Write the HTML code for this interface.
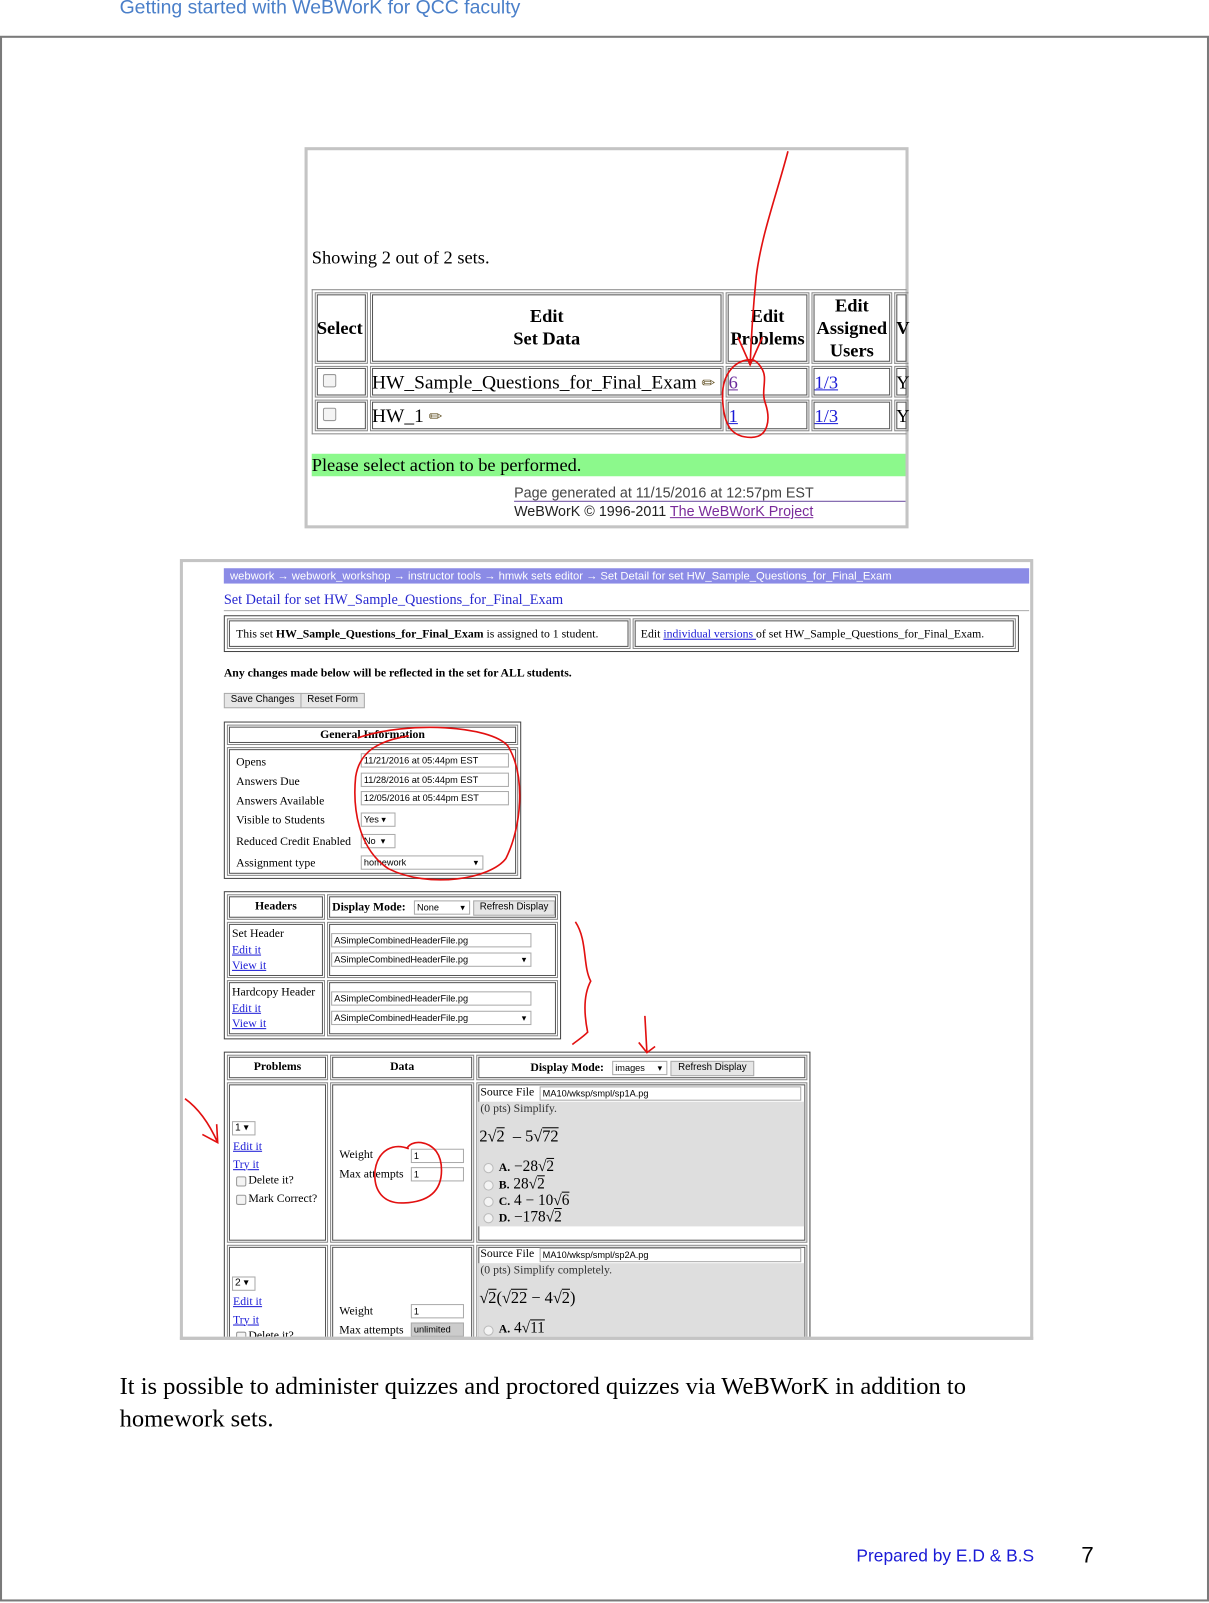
<!DOCTYPE html>
<html><head><meta charset="utf-8"><style>
html,body{margin:0;padding:0;background:#fff;width:1209px;height:1602px;overflow:hidden}
#w{position:absolute;left:0;top:0;width:1183px;height:1568px;transform:scale(1.022);transform-origin:0 0;font-family:"Liberation Serif",serif;color:#000}
.a{position:absolute;white-space:nowrap}
.s{font-family:"Liberation Sans",sans-serif}
.bx{position:absolute;box-sizing:border-box}
.cell{position:absolute;box-sizing:border-box;border:1px solid #888;outline:1px solid #555;outline-offset:-3px}
.in{position:absolute;box-sizing:border-box;border:1px solid #aaa;background:#fff;font-family:"Liberation Sans",sans-serif;font-size:9px;line-height:12px;padding-left:2px;white-space:nowrap;overflow:hidden}
.btn{position:absolute;box-sizing:border-box;border:1px solid #aaa;background:#e6e6e6;font-family:"Liberation Sans",sans-serif;font-size:9.5px;line-height:12px;text-align:center;white-space:nowrap}
.lk{color:#1a1ad6;text-decoration:underline}
.cb{position:absolute;width:8px;height:8px;border:1px solid #999;border-radius:2px;background:#f4f4f4}
.rd{position:absolute;width:8px;height:8px;border:1px solid #bbb;border-radius:50%;background:#f4f4f4}
#clip{position:absolute;left:0;top:0;width:1183px;height:1308px;overflow:hidden}
</style></head><body><div id="w">
<div class="a s" style="left:117px;top:-3px;font-size:19px;color:#4a7fc9">Getting started with WeBWorK for QCC faculty</div>
<div class="bx" style="left:0;top:35px;width:1183px;height:1532px;border:2px solid #7a7a7a"></div>

<!-- screenshot 1 -->
<div class="bx" style="left:298px;top:144px;width:591px;height:373px;border:3px solid #c4c4c4"></div>
<div class="a" style="left:305px;top:242px;font-size:18px">Showing 2 out of 2 sets.</div>
<div class="bx" style="left:305px;top:283px;width:582px;height:142px;border:1px solid #888;border-right:none"></div>
<div class="cell" style="left:308px;top:286px;width:52px;height:70px"></div>
<div class="cell" style="left:362px;top:286px;width:346px;height:70px"></div>
<div class="cell" style="left:710px;top:286px;width:82px;height:70px"></div>
<div class="cell" style="left:794px;top:286px;width:79px;height:70px"></div>
<div class="cell" style="left:875px;top:286px;width:14px;height:70px;border-right:none"></div>
<div class="a" style="left:310px;top:311px;font-size:18px;font-weight:bold">Select</div>
<div class="a" style="left:362px;top:298px;width:346px;text-align:center;font-size:18px;font-weight:bold;line-height:22px">Edit<br>Set Data</div>
<div class="a" style="left:710px;top:298px;width:82px;text-align:center;font-size:18px;font-weight:bold;line-height:22px">Edit<br>Problems</div>
<div class="a" style="left:794px;top:288px;width:79px;text-align:center;font-size:18px;font-weight:bold;line-height:22px">Edit<br>Assigned<br>Users</div>
<div class="a" style="left:877px;top:311px;font-size:18px;font-weight:bold">V</div>
<div class="cell" style="left:308px;top:358px;width:52px;height:31px"></div>
<div class="cell" style="left:362px;top:358px;width:346px;height:31px"></div>
<div class="cell" style="left:710px;top:358px;width:82px;height:31px"></div>
<div class="cell" style="left:794px;top:358px;width:79px;height:31px"></div>
<div class="cell" style="left:875px;top:358px;width:14px;height:31px"></div>
<div class="cell" style="left:308px;top:391px;width:52px;height:31px"></div>
<div class="cell" style="left:362px;top:391px;width:346px;height:31px"></div>
<div class="cell" style="left:710px;top:391px;width:82px;height:31px"></div>
<div class="cell" style="left:794px;top:391px;width:79px;height:31px"></div>
<div class="cell" style="left:875px;top:391px;width:14px;height:31px"></div>
<div class="cb" style="left:316px;top:366px;width:11px;height:11px"></div>
<div class="cb" style="left:316px;top:399px;width:11px;height:11px"></div>
<div class="a" style="left:364px;top:364px;font-size:19px">HW_Sample_Questions_for_Final_Exam <span style="color:#6a5a30;font-size:16px">&#9999;</span></div>
<div class="a" style="left:364px;top:397px;font-size:19px">HW_1 <span style="color:#6a5a30;font-size:16px">&#9999;</span></div>
<div class="a" style="left:713px;top:364px;font-size:18px;color:#6a2a9a;text-decoration:underline">6</div>
<div class="a lk" style="left:713px;top:397px;font-size:18px">1</div>
<div class="a lk" style="left:797px;top:364px;font-size:18px">1/3</div>
<div class="a lk" style="left:797px;top:397px;font-size:18px">1/3</div>
<div class="a" style="left:877px;top:364px;font-size:18px">Y</div>
<div class="a" style="left:877px;top:397px;font-size:18px">Y</div>
<div class="bx" style="left:305px;top:444px;width:581px;height:22px;background:#8cf98c"></div>
<div class="a" style="left:305px;top:445px;font-size:18px">Please select action to be performed.</div>
<div class="a s" style="left:503px;top:474px;font-size:14px;color:#444">Page generated at 11/15/2016 at 12:57pm EST</div>
<div class="bx" style="left:503px;top:490px;width:383px;height:1px;background:#6a4aa0"></div>
<div class="a s" style="left:503px;top:492px;font-size:14px;color:#222">WeBWorK © 1996-2011 <span style="color:#7a2a9a;text-decoration:underline">The WeBWorK Project</span></div>

<!-- screenshot 2 -->
<div class="bx" style="left:176px;top:547px;width:835px;height:764px;border:3px solid #c4c4c4"></div>
<div id="clip">
<div class="bx" style="left:219px;top:556px;width:788px;height:15px;background:#8b8be6"></div>
<div class="a s" style="left:225px;top:557px;font-size:11px;line-height:15px;color:#fff">webwork → webwork_workshop → instructor tools → hmwk sets editor → Set Detail for set HW_Sample_Questions_for_Final_Exam</div>
<div class="a" style="left:219px;top:580px;font-size:14px;color:#2828d0">Set Detail for set HW_Sample_Questions_for_Final_Exam</div>
<div class="bx" style="left:219px;top:597px;width:788px;height:1px;background:#aaa"></div>
<div class="bx" style="left:219px;top:602px;width:778px;height:36px;border:1px solid #444"></div>
<div class="cell" style="left:222px;top:605px;width:395px;height:30px"></div>
<div class="cell" style="left:619px;top:605px;width:375px;height:30px"></div>
<div class="a" style="left:231px;top:615px;font-size:11.5px">This set <b>HW_Sample_Questions_for_Final_Exam</b> is assigned to 1 student.</div>
<div class="a" style="left:627px;top:615px;font-size:11.5px">Edit <span class="lk">individual versions </span>of set HW_Sample_Questions_for_Final_Exam.</div>
<div class="a" style="left:219px;top:653px;font-size:11.5px;font-weight:bold">Any changes made below will be reflected in the set for ALL students.</div>
<div class="btn" style="left:219px;top:678px;width:76px;height:15px">Save Changes</div>
<div class="btn" style="left:294px;top:678px;width:63px;height:15px">Reset Form</div>

<div class="bx" style="left:219px;top:706px;width:291px;height:154px;border:1px solid #444"></div>
<div class="cell" style="left:222px;top:709px;width:285px;height:20px"></div>
<div class="cell" style="left:222px;top:731px;width:285px;height:126px"></div>
<div class="a" style="left:222px;top:713px;width:285px;text-align:center;font-size:11.5px;font-weight:bold">General Information</div>
<div class="a" style="left:231px;top:737px;font-size:11.5px;line-height:19px">Opens<br>Answers Due<br>Answers Available<br>Visible to Students<br><span style="position:relative;top:2px">Reduced Credit Enabled</span><br><span style="position:relative;top:4px">Assignment type</span></div>
<div class="in" style="left:353px;top:737px;width:145px;height:14px">11/21/2016 at 05:44pm EST</div>
<div class="in" style="left:353px;top:756px;width:145px;height:14px">11/28/2016 at 05:44pm EST</div>
<div class="in" style="left:353px;top:774px;width:145px;height:14px">12/05/2016 at 05:44pm EST</div>
<div class="in" style="left:353px;top:795px;width:34px;height:14px">Yes ▾</div>
<div class="in" style="left:353px;top:816px;width:34px;height:14px">No &nbsp;▾</div>
<div class="in" style="left:353px;top:837px;width:120px;height:14px">homework<span style="position:absolute;right:4px">▾</span></div>

<div class="bx" style="left:219px;top:872px;width:330px;height:145px;border:1px solid #444"></div>
<div class="cell" style="left:222px;top:875px;width:96px;height:25px"></div>
<div class="cell" style="left:320px;top:875px;width:226px;height:25px"></div>
<div class="cell" style="left:222px;top:902px;width:96px;height:55px"></div>
<div class="cell" style="left:320px;top:902px;width:226px;height:55px"></div>
<div class="cell" style="left:222px;top:959px;width:96px;height:55px"></div>
<div class="cell" style="left:320px;top:959px;width:226px;height:55px"></div>
<div class="a" style="left:222px;top:881px;width:96px;text-align:center;font-size:11.5px;font-weight:bold">Headers</div>
<div class="a" style="left:325px;top:882px;font-size:11.5px;font-weight:bold">Display Mode:</div>
<div class="in" style="left:405px;top:881px;width:55px;height:14px">None<span style="position:absolute;right:4px">▾</span></div>
<div class="btn" style="left:463px;top:881px;width:80px;height:15px">Refresh Display</div>
<div class="a" style="left:227px;top:907px;font-size:11.5px;line-height:15.5px">Set Header<br><span class="lk">Edit it</span><br><span class="lk">View it</span></div>
<div class="a" style="left:227px;top:964px;font-size:11.5px;line-height:15.5px">Hardcopy Header<br><span class="lk">Edit it</span><br><span class="lk">View it</span></div>
<div class="in" style="left:324px;top:913px;width:196px;height:14px">ASimpleCombinedHeaderFile.pg</div>
<div class="in" style="left:324px;top:932px;width:196px;height:14px">ASimpleCombinedHeaderFile.pg<span style="position:absolute;right:4px">▾</span></div>
<div class="in" style="left:324px;top:970px;width:196px;height:14px">ASimpleCombinedHeaderFile.pg</div>
<div class="in" style="left:324px;top:989px;width:196px;height:14px">ASimpleCombinedHeaderFile.pg<span style="position:absolute;right:4px">▾</span></div>

<div class="bx" style="left:219px;top:1029px;width:574px;height:290px;border:1px solid #444"></div>
<div class="cell" style="left:222px;top:1032px;width:99px;height:25px"></div>
<div class="cell" style="left:323px;top:1032px;width:141px;height:25px"></div>
<div class="cell" style="left:466px;top:1032px;width:324px;height:25px"></div>
<div class="cell" style="left:222px;top:1059px;width:99px;height:157px"></div>
<div class="cell" style="left:323px;top:1059px;width:141px;height:157px"></div>
<div class="cell" style="left:466px;top:1059px;width:324px;height:157px"></div>
<div class="cell" style="left:222px;top:1218px;width:99px;height:100px"></div>
<div class="cell" style="left:323px;top:1218px;width:141px;height:100px"></div>
<div class="cell" style="left:466px;top:1218px;width:324px;height:100px"></div>
<div class="a" style="left:222px;top:1038px;width:99px;text-align:center;font-size:11.5px;font-weight:bold">Problems</div>
<div class="a" style="left:323px;top:1038px;width:141px;text-align:center;font-size:11.5px;font-weight:bold">Data</div>
<div class="a" style="left:519px;top:1039px;font-size:11.5px;font-weight:bold">Display Mode:</div>
<div class="in" style="left:599px;top:1038px;width:54px;height:14px">images<span style="position:absolute;right:4px">▾</span></div>
<div class="btn" style="left:656px;top:1038px;width:82px;height:15px">Refresh Display</div>

<div class="in" style="left:227px;top:1097px;width:23px;height:14px;font-size:10px">1 ▾</div>
<div class="a" style="left:228px;top:1114px;font-size:11.5px;line-height:17.5px"><span class="lk">Edit it</span><br><span class="lk">Try it</span></div>
<div class="cb" style="left:231px;top:1151px"></div><div class="a" style="left:243px;top:1149px;font-size:11.5px">Delete it?</div>
<div class="cb" style="left:231px;top:1169px"></div><div class="a" style="left:243px;top:1167px;font-size:11.5px">Mark Correct?</div>
<div class="a" style="left:332px;top:1124px;font-size:11.5px">Weight</div>
<div class="a" style="left:332px;top:1143px;font-size:11.5px">Max attempts</div>
<div class="in" style="left:402px;top:1124px;width:52px;height:14px">1</div>
<div class="in" style="left:402px;top:1142px;width:52px;height:14px">1</div>
<div class="a" style="left:470px;top:1063px;font-size:11.5px">Source File</div>
<div class="in" style="left:528px;top:1063px;width:256px;height:14px">MA10/wksp/smpl/sp1A.pg</div>
<div class="bx" style="left:468px;top:1078px;width:319px;height:122px;background:#dedede"></div>
<div class="a" style="left:470px;top:1079px;font-size:11.5px;color:#333">(0 pts) Simplify.</div>
<div class="a" style="left:469px;top:1104px;font-size:16px">2√<span style="text-decoration:overline">2</span> &nbsp;– 5√<span style="text-decoration:overline">72</span></div>
<div class="rd" style="left:473px;top:1138px"></div><div class="a" style="left:488px;top:1134px;font-size:15px"><b style="font-size:11.5px">A.</b> −28√<span style="text-decoration:overline">2</span></div>
<div class="rd" style="left:473px;top:1155px"></div><div class="a" style="left:488px;top:1151px;font-size:15px"><b style="font-size:11.5px">B.</b> 28√<span style="text-decoration:overline">2</span></div>
<div class="rd" style="left:473px;top:1171px"></div><div class="a" style="left:488px;top:1167px;font-size:15px"><b style="font-size:11.5px">C.</b> 4 − 10√<span style="text-decoration:overline">6</span></div>
<div class="rd" style="left:473px;top:1187px"></div><div class="a" style="left:488px;top:1183px;font-size:15px"><b style="font-size:11.5px">D.</b> −178√<span style="text-decoration:overline">2</span></div>

<div class="in" style="left:227px;top:1249px;width:23px;height:14px;font-size:10px">2 ▾</div>
<div class="a" style="left:228px;top:1266px;font-size:11.5px;line-height:17.5px"><span class="lk">Edit it</span><br><span class="lk">Try it</span></div>
<div class="cb" style="left:231px;top:1303px"></div><div class="a" style="left:243px;top:1301px;font-size:11.5px">Delete it?</div>
<div class="a" style="left:332px;top:1277px;font-size:11.5px">Weight</div>
<div class="a" style="left:332px;top:1296px;font-size:11.5px">Max attempts</div>
<div class="in" style="left:402px;top:1276px;width:52px;height:14px">1</div>
<div class="in" style="left:402px;top:1294px;width:52px;height:14px;background:#ccc">unlimited</div>
<div class="a" style="left:470px;top:1221px;font-size:11.5px">Source File</div>
<div class="in" style="left:528px;top:1221px;width:256px;height:14px">MA10/wksp/smpl/sp2A.pg</div>
<div class="bx" style="left:468px;top:1236px;width:319px;height:82px;background:#dedede"></div>
<div class="a" style="left:470px;top:1237px;font-size:11.5px;color:#333">(0 pts) Simplify completely.</div>
<div class="a" style="left:469px;top:1262px;font-size:16px">√<span style="text-decoration:overline">2</span>(√<span style="text-decoration:overline">22</span> − 4√<span style="text-decoration:overline">2</span>)</div>
<div class="rd" style="left:473px;top:1297px"></div><div class="a" style="left:488px;top:1292px;font-size:15px"><b style="font-size:11.5px">A.</b> 4√<span style="text-decoration:overline">11</span></div>
</div>
<div class="bx" style="left:176px;top:1308px;width:835px;height:3px;background:#c4c4c4"></div>

<svg class="a" style="left:0;top:0" width="1183" height="1568" fill="none" stroke="#e21010" stroke-width="1.6">
<path d="M771 148 C760 190 745 230 740 270 C737 300 735 330 734 357"/>
<path d="M722 330 L734 357 L746 330"/>
<path d="M735 352 C720 352 706 365 707 390 C708 415 715 428 735 428 C752 428 754 410 749 395 C744 382 752 370 745 360 C740 352 736 352 735 352"/>
<path d="M350 722 C400 705 480 710 497 730 C515 760 510 810 495 840 C480 860 420 870 380 850 C350 830 345 790 348 760 C352 735 370 725 400 720"/>
<path d="M563 902 C575 920 570 945 578 960 C570 975 572 995 575 1010 C570 1015 565 1018 560 1022"/>
<path d="M631 994 L633 1030 M625 1020 L633 1030 L641 1024"/>
<path d="M181 1075 C195 1085 205 1100 213 1118 M198 1110 L213 1118 L212 1100"/>
<path d="M400 1124 C385 1118 370 1125 367 1145 C365 1165 375 1178 395 1177 C420 1176 432 1165 432 1145 C432 1130 425 1120 412 1118 C405 1117 400 1120 398 1124"/>
</svg>

<div class="a" style="left:117px;top:1341px;font-size:24px;line-height:32px">It is possible to administer quizzes and proctored quizzes via WeBWorK in addition to<br>homework sets.</div>
<div class="a s" style="left:838px;top:1513px;font-size:17px;color:#1a1ad6">Prepared by E.D &amp; B.S</div>
<div class="a s" style="left:1058px;top:1509px;font-size:22px">7</div>
</div></body></html>
